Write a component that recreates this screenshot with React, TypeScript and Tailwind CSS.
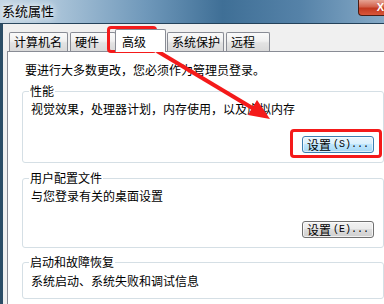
import React from "react";

const tabs = [
  { label: "计算机名", ml: "ml-[2px]", w: "w-[59px]" },
  { label: "硬件", ml: "ml-[2px]", w: "w-[46px]" },
  { label: "高级", ml: "ml-[-1px]", w: "w-[51px]", active: true },
  { label: "系统保护", ml: "ml-[1px]", w: "w-[57px]" },
  { label: "远程", ml: "ml-[2px]", w: "w-[44px]" },
];

function WinButton({ label, keyHint, focused }: { label: string; keyHint: string; focused?: boolean }) {
  return (
    <button
      className={
        focused
          ? "w-[72px] h-[17px] rounded-[3px] border border-[#3c7fb1] bg-[linear-gradient(to_bottom,#eaf6fd_0%,#d9f0fc_45%,#bee6fd_50%,#a7d9f5_100%)] shadow-[inset_0_0_0_1px_rgba(255,255,255,0.6)] text-[12px] leading-[15px] text-black flex items-center justify-center"
          : "w-[72px] h-[17px] rounded-[3px] border border-[#707070] bg-[linear-gradient(to_bottom,#f2f2f2_0%,#ebebeb_45%,#dddddd_50%,#cfcfcf_100%)] shadow-[inset_0_0_0_1px_rgba(255,255,255,0.7)] text-[12px] leading-[15px] text-black flex items-center justify-center"
      }
    >
      <span>{label}</span>
      <span className="ml-[2px] font-['Liberation_Mono',monospace] text-[10px]">({keyHint})...</span>
    </button>
  );
}

function Group({
  title,
  desc,
  button,
  keyHint = "",
  focused,
  mt,
}: {
  title: string;
  desc: string;
  button?: string;
  keyHint?: string;
  focused?: boolean;
  mt: string;
}) {
  return (
    <fieldset className={`${mt} ml-[14px] w-[362px] border border-[#d5dfe5] rounded-[3px] pl-[8px] pr-[8px] pb-[9px]`}>
      <legend className="ml-[-2px] px-[1px] leading-[16px]">{title}</legend>
      <div className={button ? "mt-[2px] leading-[16px]" : "mt-[3px] leading-[16px]"}>{desc}</div>
      {button && (
        <div className={`flex justify-end mr-[1px] ${focused ? "mt-[19px]" : "mt-[17px]"}`}>
          <WinButton label={button} keyHint={keyHint} focused={focused} />
        </div>
      )}
    </fieldset>
  );
}

export default function App() {
  return (
    <div className="relative w-[384px] h-[304px] overflow-hidden bg-[#f0f0f0] font-['Noto_Sans_CJK_SC','Noto_Sans',sans-serif] text-[12px] text-black">
      {/* title bar */}
      <div className="h-[24px] flex items-start justify-between border-b border-[#24425a] bg-[linear-gradient(to_right,#c4d6e4_0%,#a9c3d8_15%,#6f98ba_38%,#3f6f96_58%,#5582a8_78%,#86aac7_100%)]">
        <div className="pl-[2px] pt-[3px] text-[13px] leading-[16px] [text-shadow:0_0_6px_#ffffff,0_0_10px_#ffffff]">
          系统属性
        </div>
        <div className="w-[44px] h-[16px] mr-[-18px] rounded-bl-[4px] border border-t-0 border-r-0 border-[#4a1d14] bg-[linear-gradient(to_bottom,#e6a494_0%,#d2624c_45%,#c2391f_55%,#d9563a_100%)] flex items-center justify-center text-white text-[11px] font-bold font-['Liberation_Sans',sans-serif]">
          X
        </div>
      </div>

      <div className="flex h-[280px]">
        <div className="w-[3px] bg-[#2b4d66]" />
        <div className="flex-1 pl-[4px] flex flex-col">
          {/* tabs */}
          <div className="h-[27px] flex items-end shrink-0">
            {tabs.map((t) =>
              t.active ? (
                <div
                  key={t.label}
                  className={`${t.ml} ${t.w} relative z-10 h-[23px] mb-[-1px] border border-b-0 border-[#898c95] rounded-t-[2px] bg-white pl-[6px] pt-[3px] leading-[17px]`}
                >
                  {t.label}
                </div>
              ) : (
                <div
                  key={t.label}
                  className={`${t.ml} ${t.w} h-[19px] border border-b-0 border-[#898c95] rounded-t-[2px] bg-[linear-gradient(to_bottom,#fafafa_0%,#f0f0f0_45%,#e3e3e3_55%,#d9d9d9_100%)] pl-[4px] leading-[17px]`}
                >
                  {t.label}
                </div>
              )
            )}
          </div>

          {/* panel */}
          <div className="flex-1 border-t border-l border-[#898c95] bg-white pt-[10px]">
            <div className="pl-[17px] leading-[16px]">要进行大多数更改，您必须作为管理员登录。</div>
            <Group
              mt="mt-[5px]"
              title="性能"
              desc="视觉效果，处理器计划，内存使用，以及虚拟内存"
              button="设置"
              keyHint="S"
              focused
            />
            <Group mt="mt-[7px]" title="用户配置文件" desc="与您登录有关的桌面设置" button="设置" keyHint="E" />
            <Group mt="mt-[6px]" title="启动和故障恢复" desc="系统启动、系统失败和调试信息" />
          </div>
        </div>
      </div>

      {/* annotations */}
      <div className="absolute left-[107px] top-[26px] w-[50px] h-[27px] border-[3px] border-[#f41a1a] rounded-[4px]" />
      <div className="absolute left-[290px] top-[129px] w-[92px] h-[29px] border-[3px] border-[#f41a1a] rounded-[4px]" />
      <svg className="absolute left-0 top-0 pointer-events-none" width="384" height="304" viewBox="0 0 384 304">
        <line x1="157" y1="51" x2="254" y2="109" stroke="#f41a1a" strokeWidth="4" />
        <polygon points="270,119 248,115 257,100" fill="#f41a1a" />
      </svg>
    </div>
  );
}
